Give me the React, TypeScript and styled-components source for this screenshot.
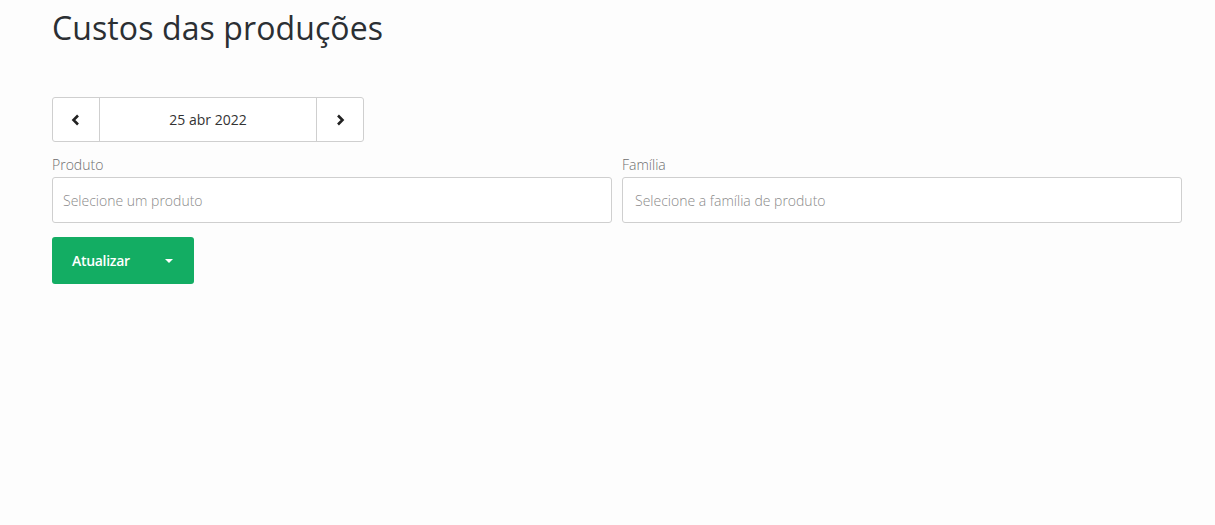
import React from "react";
import styled, { createGlobalStyle } from "styled-components";

const Global = createGlobalStyle`
  html, body { margin: 0; padding: 0; background: #fdfdfd; }
  body { font-family: "Open Sans", "Noto Sans", sans-serif; color: #333; }
  * { box-sizing: border-box; }
`;

const Page = styled.div`
  padding: 6px 33px 0 52px;
  display: flex;
  flex-direction: column;
`;

const Title = styled.h1`
  margin: 0;
  font-size: 32px;
  font-weight: 400;
  color: #2b2f33;
  line-height: 44px;
  letter-spacing: 0.1px;
`;

const DatePicker = styled.div`
  margin-top: 47px;
  display: flex;
  width: 312px;
  height: 45px;
  border: 1px solid #cfcfcf;
  border-radius: 3px;
  background: #fff;
`;

const NavButton = styled.button`
  width: 46px;
  border: none;
  background: transparent;
  display: flex;
  align-items: center;
  justify-content: center;
  padding: 0;
  color: #222;
`;

const DateText = styled.div`
  flex: 1;
  display: flex;
  align-items: center;
  justify-content: center;
  border-left: 1px solid #cfcfcf;
  border-right: 1px solid #cfcfcf;
  font-size: 14px;
  color: #333;
`;

const Fields = styled.div`
  margin-top: 13px;
  display: grid;
  grid-template-columns: 1fr 1fr;
  gap: 10px;
`;

const Field = styled.div`
  display: flex;
  flex-direction: column;
`;

const Label = styled.label`
  font-size: 14px;
  font-weight: 300;
  color: #6f6f6f;
  line-height: 20px;
  margin-bottom: 2px;
`;

const Input = styled.input<{ $pad: number }>`
  height: 46px;
  border: 1px solid #cfcfcf;
  border-radius: 3px;
  background: #fff;
  padding: 0 ${(p) => p.$pad}px;
  font-family: "Open Sans", sans-serif;
  font-size: 14px;
  font-weight: 300;
  color: #333;
  &::placeholder { color: #8a8a8a; }
  outline: none;
`;

const Button = styled.button`
  margin-top: 14px;
  width: 142px;
  height: 47px;
  border: none;
  border-radius: 3px;
  background: #13ad63;
  color: #fff;
  font-family: "Open Sans", sans-serif;
  font-weight: 600;
  font-size: 14px;
  letter-spacing: -0.3px;
  display: flex;
  align-items: center;
  padding: 0 21px 0 20px;
  justify-content: space-between;
`;

const Caret = styled.span`
  width: 0;
  height: 0;
  border-left: 4px solid transparent;
  border-right: 4px solid transparent;
  border-top: 4px solid #fff;
`;

const Chevron = ({ dir }: { dir: "left" | "right" }) => (
  <svg width="10" height="12" viewBox="0 0 10 12">
    <path
      d={dir === "left" ? "M7 1.5 L2.5 6 L7 10.5" : "M3 1.5 L7.5 6 L3 10.5"}
      fill="none"
      stroke="#222"
      strokeWidth="2.6"
      strokeLinejoin="miter"
    />
  </svg>
);

export default function App() {
  return (
    <>
      <Global />
      <Page>
        <Title>Custos das produções</Title>
        <DatePicker>
          <NavButton aria-label="anterior"><Chevron dir="left" /></NavButton>
          <DateText>25 abr 2022</DateText>
          <NavButton aria-label="próximo"><Chevron dir="right" /></NavButton>
        </DatePicker>
        <Fields>
          <Field>
            <Label>Produto</Label>
            <Input $pad={10} placeholder="Selecione um produto" />
          </Field>
          <Field>
            <Label>Família</Label>
            <Input $pad={12} placeholder="Selecione a família de produto" />
          </Field>
        </Fields>
        <div>
          <Button>
            Atualizar
            <Caret />
          </Button>
        </div>
      </Page>
    </>
  );
}
